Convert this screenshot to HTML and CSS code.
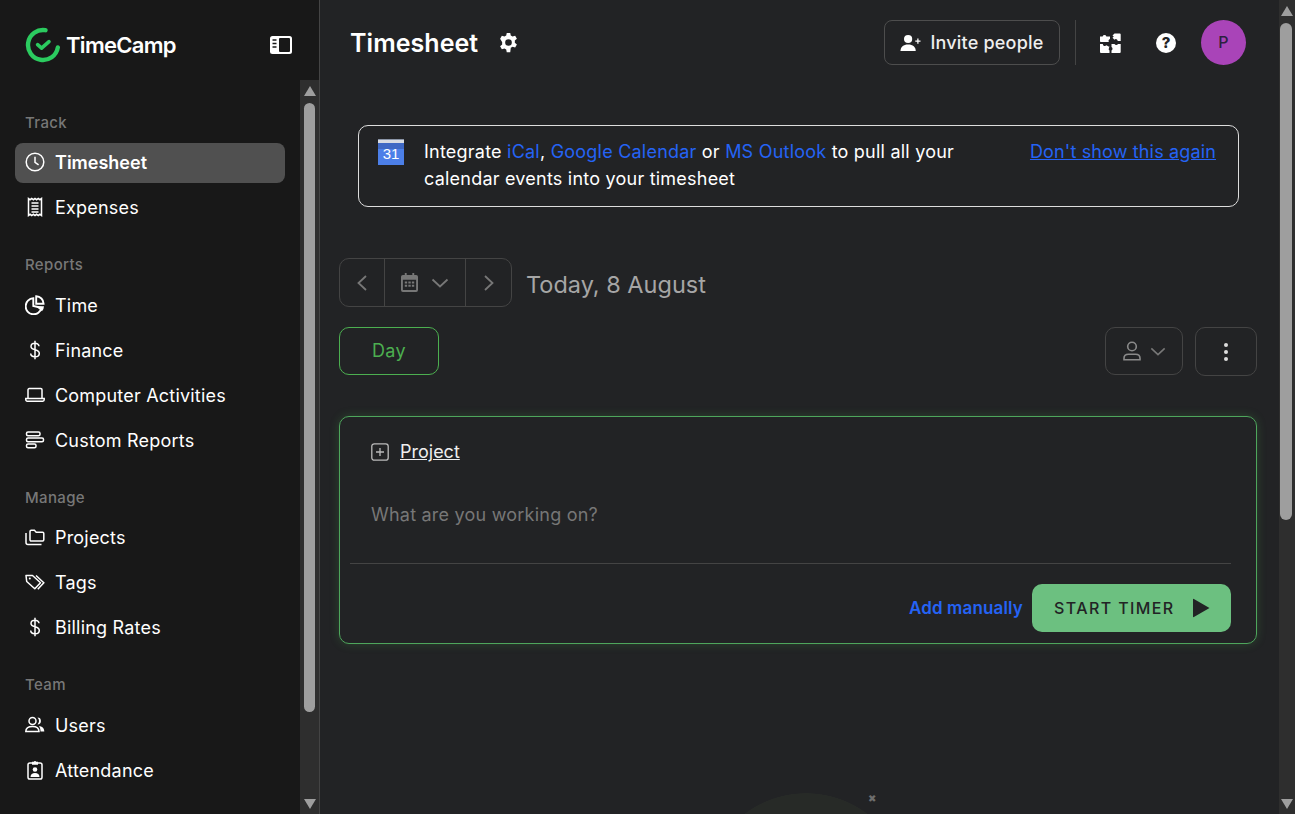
FILE: index.html
```html
<!DOCTYPE html>
<html lang="en">
<head>
  <meta charset="UTF-8" />
  <title>Timesheet - TimeCamp</title>
  <link rel="stylesheet" href="styles.css">
</head>
<body>
  <aside class="sidebar">
    <div class="brand">
      <svg class="brand-logo" viewBox="0 0 36 36" fill="none" stroke="#2bcb5f" stroke-linecap="round" stroke-linejoin="round">
        <path d="M20.5 3.2A15 15 0 1 0 32.8 20.5" stroke-width="4.4"/>
        <path d="M12.6 17.6l4 3.6 7.4-6.6" stroke-width="3.6"/>
      </svg>
      <span class="brand-name">TimeCamp</span>
      <svg class="collapse" viewBox="0 0 24 20">
        <rect x="1" y="1" width="22" height="18" rx="2.5" fill="#fff"/>
        <rect x="10" y="3" width="11" height="14" rx="1" fill="#181818"/>
        <path d="M3.5 5h4M3.5 8.500h4M3.500 12h4" stroke="#181818" stroke-width="1.500"/>
      </svg>
    </div>
    <div class="side-body">
      <nav class="side-nav">
        <div class="nav-section">
          <div class="nav-label">Track</div>
          <a class="nav-item active">
            <svg class="nav-icon" viewBox="0 0 20 20"><circle cx="10" cy="10" r="8.800"/><path d="M10 4.800V10.300l3.600 2.600"/></svg>
            <span>Timesheet</span>
          </a>
          <a class="nav-item">
            <svg class="nav-icon" viewBox="0 0 20 20"><path d="M3.500 1.500l1.600 1.200 1.600-1.200 1.700 1.200L10 1.500l1.600 1.200 1.700-1.200 1.600 1.200 1.600-1.200v17l-1.600-1.200-1.600 1.200-1.700-1.200L10 18.500l-1.600-1.200-1.700 1.200-1.600-1.200-1.600 1.200z"/><path d="M6.500 6h7M6.500 9h7M6.500 12h7M6.500 15h7"/></svg>
            <span>Expenses</span>
          </a>
        </div>
        <div class="nav-section">
          <div class="nav-label">Reports</div>
          <a class="nav-item">
            <svg class="nav-icon pie" viewBox="0 0 20 20"><path d="M8.300 3.300A8 8 0 1 0 16.500 12.800L8.300 11z"/><path d="M11.200 1.300a7.500 7.500 0 0 1 7.400 7.500h-7.400z"/><path class="fill" d="M10.500 11.200h8.500a8 8 0 0 1-2 5z"/></svg>
            <span>Time</span>
          </a>
          <a class="nav-item">
            <svg class="nav-icon" viewBox="0 0 20 20"><path d="M14 6.200C14 4.300 12.200 3.300 10 3.300S6 4.500 6 6.400c0 4.400 8.300 2.400 8.300 7 0 2-1.900 3.300-4.300 3.300s-4.300-1.200-4.300-3.200M10 .8v18.400"/></svg>
            <span>Finance</span>
          </a>
          <a class="nav-item">
            <svg class="nav-icon" viewBox="0 0 20 20"><path d="M3 13.500V4.800c0-.7.500-1.200 1.200-1.200h11.600c.7 0 1.200.5 1.200 1.200v8.700"/><path d="M.8 13.600h18.400v1.200c0 .8-.6 1.400-1.400 1.400H2.200c-.8 0-1.400-.6-1.400-1.400z"/></svg>
            <span>Computer Activities</span>
          </a>
          <a class="nav-item">
            <svg class="nav-icon" viewBox="0 0 20 20"><rect x="1.500" y="2" width="13.500" height="3.800" rx="1.500"/><rect x="1.500" y="8" width="17" height="3.800" rx="1.500"/><rect x="1.500" y="14" width="9.500" height="3.800" rx="1.500"/></svg>
            <span>Custom Reports</span>
          </a>
        </div>
        <div class="nav-section">
          <div class="nav-label">Manage</div>
          <a class="nav-item">
            <svg class="nav-icon" viewBox="0 0 20 20"><path d="M5 12.800V4.500c0-.7.500-1.200 1.200-1.200h3.200l1.800 1.900h6.400c.7 0 1.200.5 1.200 1.200v6.400c0 .7-.5 1.200-1.200 1.200H6.200C5.500 14 5 13.500 5 12.800z"/><path d="M1 6v9.500c0 1.200.9 2 2 2h13.500"/></svg>
            <span>Projects</span>
          </a>
          <a class="nav-item">
            <svg class="nav-icon" viewBox="0 0 20 20"><path d="M1 3.500h6.500l8 7.200-5.700 6.100L1.700 9.500z" stroke-linejoin="round"/><path d="M11 3.500l7.800 7.200-6 6.600"/><circle class="fill" cx="4.800" cy="6.600" r="1"/></svg>
            <span>Tags</span>
          </a>
          <a class="nav-item">
            <svg class="nav-icon" viewBox="0 0 20 20"><path d="M14 6.200C14 4.300 12.200 3.300 10 3.300S6 4.500 6 6.400c0 4.400 8.300 2.400 8.300 7 0 2-1.900 3.300-4.300 3.300s-4.300-1.200-4.300-3.200M10 .8v18.400"/></svg>
            <span>Billing Rates</span>
          </a>
        </div>
        <div class="nav-section">
          <div class="nav-label">Team</div>
          <a class="nav-item">
            <svg class="nav-icon" viewBox="0 0 20 20"><circle cx="7.500" cy="6" r="3.500"/><path d="M.8 16.500c0-3.300 2.700-5 6.700-5s6.500 1.700 6.500 5z"/><path class="fill" d="M12.500 2.600a3.400 3.400 0 1 1 0 6.800 5 5 0 0 0 0-6.800zM14 11c3 .3 5.300 2 5.300 5.500h-3.800c0-2.300-.5-4-1.500-5.500z"/></svg>
            <span>Users</span>
          </a>
          <a class="nav-item">
            <svg class="nav-icon" viewBox="0 0 20 20"><rect x="3" y="3" width="14" height="16" rx="1.800"/><path class="fill" d="M7 1.800h1.800a1.300 1.300 0 0 1 2.400 0H13v3H7z"/><circle class="fill" cx="10" cy="9.500" r="2.300"/><path class="fill" d="M5.500 17c0-2.800 1.800-4 4.500-4s4.500 1.200 4.500 4z"/></svg>
            <span>Attendance</span>
          </a>
        </div>
      </nav>
      <div class="scrollbar side-scroll">
        <i class="arrow-up"></i>
        <div class="thumb"></div>
        <i class="arrow-down"></i>
      </div>
    </div>
  </aside>

  <main class="main">
    <div class="page">
      <header class="topbar">
        <h1>Timesheet</h1>
        <svg class="gear" viewBox="0 0 24 24"><path fill-rule="evenodd" d="M10 1h4l.6 3.100c.7.300 1.400.6 2 1.100l3-1 2 3.500-2.400 2.100c.1.800.1 1.600 0 2.400l2.400 2.100-2 3.500-3-1c-.6.500-1.300.8-2 1.100L14 23h-4l-.6-3.100c-.7-.3-1.400-.6-2-1.100l-3 1-2-3.500 2.400-2.100c-.1-.8-.1-1.600 0-2.400L2.400 7.700l2-3.500 3 1c.6-.5 1.300-.8 2-1.100zM12 8.200a3.800 3.800 0 1 0 0 7.600 3.800 3.800 0 0 0 0-7.600z"/></svg>
        <div class="topbar-right">
          <button class="invite">
            <svg class="invite-icon" viewBox="0 0 22 18"><circle cx="8.500" cy="4.800" r="4.300"/><path d="M.5 17.500c0-4.500 3-7 8-7s8 2.500 8 7z"/><path d="M16 7h5.500M18.750 4.300v5.400" stroke="#fff" stroke-width="1.300" fill="none"/></svg>
            Invite people
          </button>
          <span class="top-sep"></span>
          <svg class="puzzle" viewBox="0 0 21 21"><path d="M0 4.500h2.600a2 2 0 0 1 3.800 0H10v2.600a1.800 1.800 0 0 0-1 3H0.800a.8.800 0 0 1-.8-.8z"/><path d="M12.500 3.500l2-2h5.200a1 1 0 0 1 1 1V9h-3a1.800 1.800 0 0 0-3.200-1.200L12.500 5.800l1.300-1.200z"/><path d="M0 12h2.800a2 2 0 0 0 3.600 1.200L9.500 15v-1l-.5 2a1.800 1.800 0 0 0 .5 2.500V21H1a1 1 0 0 1-1-1z"/><path d="M11.500 12h3a2 2 0 0 0 3.500 0h2.700v8a1 1 0 0 1-1 1h-8.200v-2.500a2 2 0 0 0 0-3.500z"/></svg>
          <span class="help">?</span>
          <span class="avatar">P</span>
        </div>
      </header>

      <section class="banner">
        <svg class="cal-logo" viewBox="0 0 26 26">
          <rect y="0" width="26" height="6" fill="#8a94a6"/>
          <rect y="1" width="26" height="3" fill="#d9dce3"/>
          <rect y="4" width="26" height="6" fill="#3f68c4"/>
          <rect y="10" width="26" height="16" fill="#4c7fe8"/>
          <text x="13" y="20" text-anchor="middle" class="cal-num">31</text>
        </svg>
        <p class="banner-text">Integrate <a>iCal</a>, <a>Google Calendar</a> or <a>MS Outlook</a> to pull all your<br>calendar events into your timesheet</p>
        <a class="banner-close">Don't show this again</a>
      </section>

      <div class="date-row">
        <div class="date-nav">
          <div class="date-btn prev">
            <svg class="chev" viewBox="0 0 12 18"><path d="M10 2L2.500 9l7.500 7"/></svg>
          </div>
          <div class="date-btn pick">
            <svg class="cal" viewBox="0 0 18 20"><path fill-rule="evenodd" d="M4 0h2v2h6V0h2v2h2a2 2 0 0 1 2 2v14a2 2 0 0 1-2 2H2a2 2 0 0 1-2-2V4a2 2 0 0 1 2-2h2zM2 7v11h14V7z"/><path d="M4 9h2.500v2H4zM7.800 9h2.500v2H7.800zM11.500 9H14v2h-2.500zM4 12.500h2.500v2H4zM7.800 12.500h2.500v2H7.800zM11.500 12.500H14v2h-2.500z"/></svg>
            <svg class="chev-down" viewBox="0 0 18 10"><path d="M1.500 1.500L9 8.500l7.500-7"/></svg>
          </div>
          <div class="date-btn next">
            <svg class="chev" viewBox="0 0 12 18"><path d="M2 2l7.500 7L2 16"/></svg>
          </div>
        </div>
        <span class="date-title">Today, 8 August</span>
      </div>

      <div class="view-row">
        <button class="day-btn">Day</button>
        <div class="view-tools">
          <button class="tool-btn user-btn">
            <svg class="user-icon" viewBox="0 0 18 20"><circle cx="9" cy="5.500" r="4.300"/><path d="M1 18.800v-1.600c0-2.500 2-4 4.500-4h7c2.500 0 4.500 1.500 4.500 4v1.600z"/></svg>
            <svg class="chev-down small" viewBox="0 0 18 10"><path d="M1.500 1.500L9 8.500l7.500-7"/></svg>
          </button>
          <button class="tool-btn more-btn"><i></i><i></i><i></i></button>
        </div>
      </div>

      <section class="entry-card">
        <div class="project-row">
          <svg class="plus-box" viewBox="0 0 18 18"><rect x=".8" y=".8" width="16.400" height="16.400" rx="2.500"/><path d="M9 5v8M5 9h8"/></svg>
          <a class="project-link">Project</a>
        </div>
        <div class="task-input">What are you working on?</div>
        <div class="card-actions">
          <a class="add-manual">Add manually</a>
          <button class="start-btn">
            START TIMER
            <svg class="play" viewBox="0 0 18 20"><path d="M1 1.500v17a.6.6 0 0 0 .9.500L17.500 10 1.900 1a.6.6 0 0 0-.9.500z"/></svg>
          </button>
        </div>
      </section>
    </div>
    <div class="scrollbar main-scroll">
      <i class="arrow-up"></i>
      <div class="thumb"></div>
      <i class="arrow-down"></i>
    </div>
    <div class="peek"></div>
    <span class="peek-close">✖</span>
  </main>
</body>
</html>
```

FILE: styles.css
```css
* {
  box-sizing: border-box;
}
html, body {
  height: 100%;
}
body {
  margin: 0;
  display: flex;
  overflow: hidden;
  background: #222325;
  color: #fff;
  font-family: Inter, "Open Sans", sans-serif;
  font-size: 18px;
}
button {
  font-family: inherit;
  background: none;
  cursor: pointer;
}

/* sidebar */
.sidebar {
  width: 320px;
  flex: none;
  display: flex;
  flex-direction: column;
  background: #181818;
  border-right: 1px solid #444;
}
.brand {
  height: 80px;
  flex: none;
  display: flex;
  align-items: center;
  padding: 0 26px 0 25px;
  margin-top: 5px;
  margin-bottom: -5px;
}
.brand-logo {
  width: 36px;
  height: 36px;
  margin-right: 5px;
}
.brand-name {
  flex: 1;
  font-size: 22px;
  font-weight: 600;
  letter-spacing: -.7px;
}
.collapse {
  width: 24px;
  height: 20px;
}
.side-body {
  flex: 1;
  min-height: 0;
  display: flex;
}
.side-nav {
  flex: 1;
  padding: 33px 15px 0;
}
.nav-section {
  margin-bottom: 27px;
}
.nav-section:nth-child(2), .nav-section:nth-child(3) {
  margin-bottom: 28px;
}
.nav-section:nth-child(3) .nav-label {
  margin-bottom: 9px;
}
.nav-section:first-child .nav-item {
  padding-bottom: 2px;
}
.nav-label {
  height: 20px;
  line-height: 20px;
  padding-left: 10px;
  margin-bottom: 10px;
  font-size: 15px;
  font-weight: 500;
  letter-spacing: .35px;
  color: #777;
}
.nav-item {
  height: 40px;
  margin-bottom: 5px;
  padding-left: 10px;
  display: flex;
  align-items: center;
  gap: 10px;
  border-radius: 8px;
  font-size: 18px;
  letter-spacing: .2px;
  color: #fff;
}
.nav-item.active {
  background: #505050;
  font-weight: 600;
  letter-spacing: 0;
}
.nav-icon {
  width: 20px;
  height: 20px;
  flex: none;
  fill: none;
  stroke: #fff;
  stroke-width: 1.500;
}
.nav-icon.pie {
  stroke-width: 1.900;
}
.nav-icon .fill {
  fill: #fff;
  stroke: none;
}

/* scrollbars */
.scrollbar {
  flex: none;
  display: flex;
  flex-direction: column;
  align-items: center;
  background: #2e2e2e;
}
.side-scroll {
  width: 19px;
}
.main-scroll {
  width: 16px;
  height: 100%;
}
.thumb {
  background: #9e9e9e;
  border-radius: 6px;
}
.side-scroll .thumb {
  width: 11px;
  height: 609px;
  margin-top: 7px;
}
.main-scroll .thumb {
  width: 12px;
  height: 497px;
  margin: 7px 3px 0 0;
}
.arrow-up, .arrow-down {
  flex: none;
  width: 0;
  height: 0;
  border-left: 6px solid transparent;
  border-right: 6px solid transparent;
}
.arrow-up {
  margin-top: 6px;
  border-bottom: 10px solid #9e9e9e;
}
.arrow-down {
  margin-top: auto;
  margin-bottom: 5px;
  border-top: 10px solid #9e9e9e;
}

/* main column */
.main {
  flex: 1;
  min-width: 0;
  position: relative;
  display: flex;
}
.page {
  flex: 1;
  min-width: 0;
  padding: 20px 22px 0 19px;
}
.topbar {
  height: 45px;
  display: flex;
  align-items: center;
  padding-left: 11px;
}
.topbar h1 {
  margin: 0;
  font-size: 25px;
  font-weight: 600;
  letter-spacing: .05px;
}
.gear {
  width: 21px;
  height: 21px;
  margin-left: 20px;
  fill: #fff;
}
.topbar-right {
  margin-left: auto;
  display: flex;
  align-items: center;
  margin-right: 11px;
}
.invite {
  width: 176px;
  height: 45px;
  display: flex;
  align-items: center;
  justify-content: center;
  gap: 9px;
  border: 1px solid #4d4d4d;
  border-radius: 8px;
  font-size: 18px;
  font-weight: 500;
  letter-spacing: .2px;
  color: #eee;
}
.invite-icon {
  width: 21px;
  height: 18px;
  fill: #fff;
}
.top-sep {
  width: 1px;
  height: 45px;
  background: #444;
  margin: 0 24px 0 15px;
}
.puzzle {
  width: 21px;
  height: 21px;
  fill: #fff;
}
.help {
  width: 20px;
  height: 20px;
  margin-left: 35px;
  border-radius: 50%;
  background: #fff;
  color: #222325;
  font-size: 15px;
  font-weight: 800;
  line-height: 20px;
  text-align: center;
}
.avatar {
  width: 45px;
  height: 45px;
  margin-left: 25px;
  border-radius: 50%;
  background: #a944b8;
  color: #2c2140;
  font-size: 16px;
  font-weight: 500;
  line-height: 45px;
  text-align: center;
}

/* integrations banner */
.banner {
  width: 881px;
  height: 82px;
  margin: 60px 0 0 19px;
  padding: 12px 22px 0 19px;
  display: flex;
  border: 1px solid #ddd;
  border-radius: 10px;
}
.cal-logo {
  width: 26px;
  height: 26px;
  flex: none;
  margin: 1px 20px 0 0;
}
.cal-num {
  font-size: 15px;
  fill: #fff;
  font-family: "Liberation Sans", sans-serif;
}
.banner-text {
  margin: 0;
  flex: 1;
  font-size: 18px;
  line-height: 27px;
  letter-spacing: .22px;
  color: #fff;
}
.banner-text a, .banner-close {
  color: #2563f5;
}
.banner-close {
  font-size: 18px;
  line-height: 27px;
  letter-spacing: .15px;
  text-decoration: underline;
}

/* date row */
.date-row {
  margin-top: 51px;
  display: flex;
  align-items: center;
  gap: 15px;
}
.date-nav {
  width: 173px;
  height: 49px;
  display: flex;
  border: 1px solid #444;
  border-radius: 10px;
}
.date-btn {
  display: flex;
  align-items: center;
  justify-content: center;
}
.prev {
  width: 45px;
  border-right: 1px solid #444;
}
.pick {
  width: 81px;
  gap: 13px;
  border-right: 1px solid #444;
}
.next {
  flex: 1;
}
.chev {
  width: 12px;
  height: 18px;
  fill: none;
  stroke: #777;
  stroke-width: 1.800;
}
.cal {
  width: 17px;
  height: 19px;
  fill: #777;
}
.chev-down {
  width: 18px;
  height: 10px;
  fill: none;
  stroke: #777;
  stroke-width: 1.800;
}
.chev-down.small {
  width: 16px;
  height: 9px;
}
.date-title {
  padding-top: 3px;
  margin-left: -1px;
  font-size: 23.500px;
  color: #a6a6a6;
}

/* view switch */
.view-row {
  margin-top: 20px;
  display: flex;
  justify-content: space-between;
}
.day-btn {
  width: 100px;
  height: 48px;
  padding: 0 0 2px;
  border: 1px solid #4caf50;
  border-radius: 10px;
  color: #4caf50;
  font-size: 18px;
  letter-spacing: .3px;
}
.view-tools {
  display: flex;
  gap: 12px;
}
.tool-btn {
  height: 48px;
  display: flex;
  align-items: center;
  justify-content: center;
  border: 1px solid #444;
  border-radius: 10px;
}
.user-btn {
  width: 78px;
  gap: 9px;
}
.user-icon {
  width: 18px;
  height: 20px;
  fill: none;
  stroke: #8a8a8a;
  stroke-width: 1.600;
}
.more-btn {
  width: 62px;
  height: 49px;
  flex-direction: column;
  gap: 3px;
}
.more-btn i {
  width: 4px;
  height: 4px;
  border-radius: 50%;
  background: #ddd;
}

/* timer card */
.entry-card {
  height: 228px;
  margin-top: 40px;
  padding: 0 25px 0 10px;
  border: 1px solid #4ea65c;
  border-radius: 10px;
  box-shadow: 0 0 10px rgba(76, 175, 80, .25);
}
.project-row {
  display: flex;
  align-items: center;
  gap: 11px;
  padding: 26px 0 0 21px;
}
.plus-box {
  width: 18px;
  height: 18px;
  fill: none;
  stroke: #bbb;
  stroke-width: 1.300;
}
.project-link {
  font-size: 18px;
  line-height: 18px;
  color: #eee;
  text-decoration: underline;
}
.task-input {
  height: 94px;
  padding: 33px 0 0 21px;
  margin-top: 9px;
  border-bottom: 1px solid #444;
  font-size: 18px;
  line-height: 24px;
  letter-spacing: .22px;
  color: #777;
}
.card-actions {
  margin-top: 20px;
  display: flex;
  align-items: center;
  justify-content: flex-end;
  gap: 9px;
}
.add-manual {
  font-size: 17px;
  font-weight: 600;
  letter-spacing: .15px;
  color: #2563f5;
}
.start-btn {
  width: 199px;
  height: 48px;
  display: flex;
  align-items: center;
  justify-content: space-between;
  padding: 0 21px 0 22px;
  border: none;
  border-radius: 10px;
  background: #6cc080;
  color: #222325;
  font-size: 16px;
  font-weight: 500;
  letter-spacing: 1.400px;
}
.play {
  width: 18px;
  height: 20px;
  fill: #222325;
}

/* collapsed widget peeking at the bottom */
.peek {
  position: absolute;
  left: 424px;
  top: 793px;
  width: 124px;
  height: 21px;
  background: radial-gradient(circle 102px at 62px 102px, #272a27 99.5%, transparent 100%);
}
.peek-close {
  position: absolute;
  left: 548px;
  top: 792px;
  font-size: 10px;
  color: #6e6e6e;
}
```
